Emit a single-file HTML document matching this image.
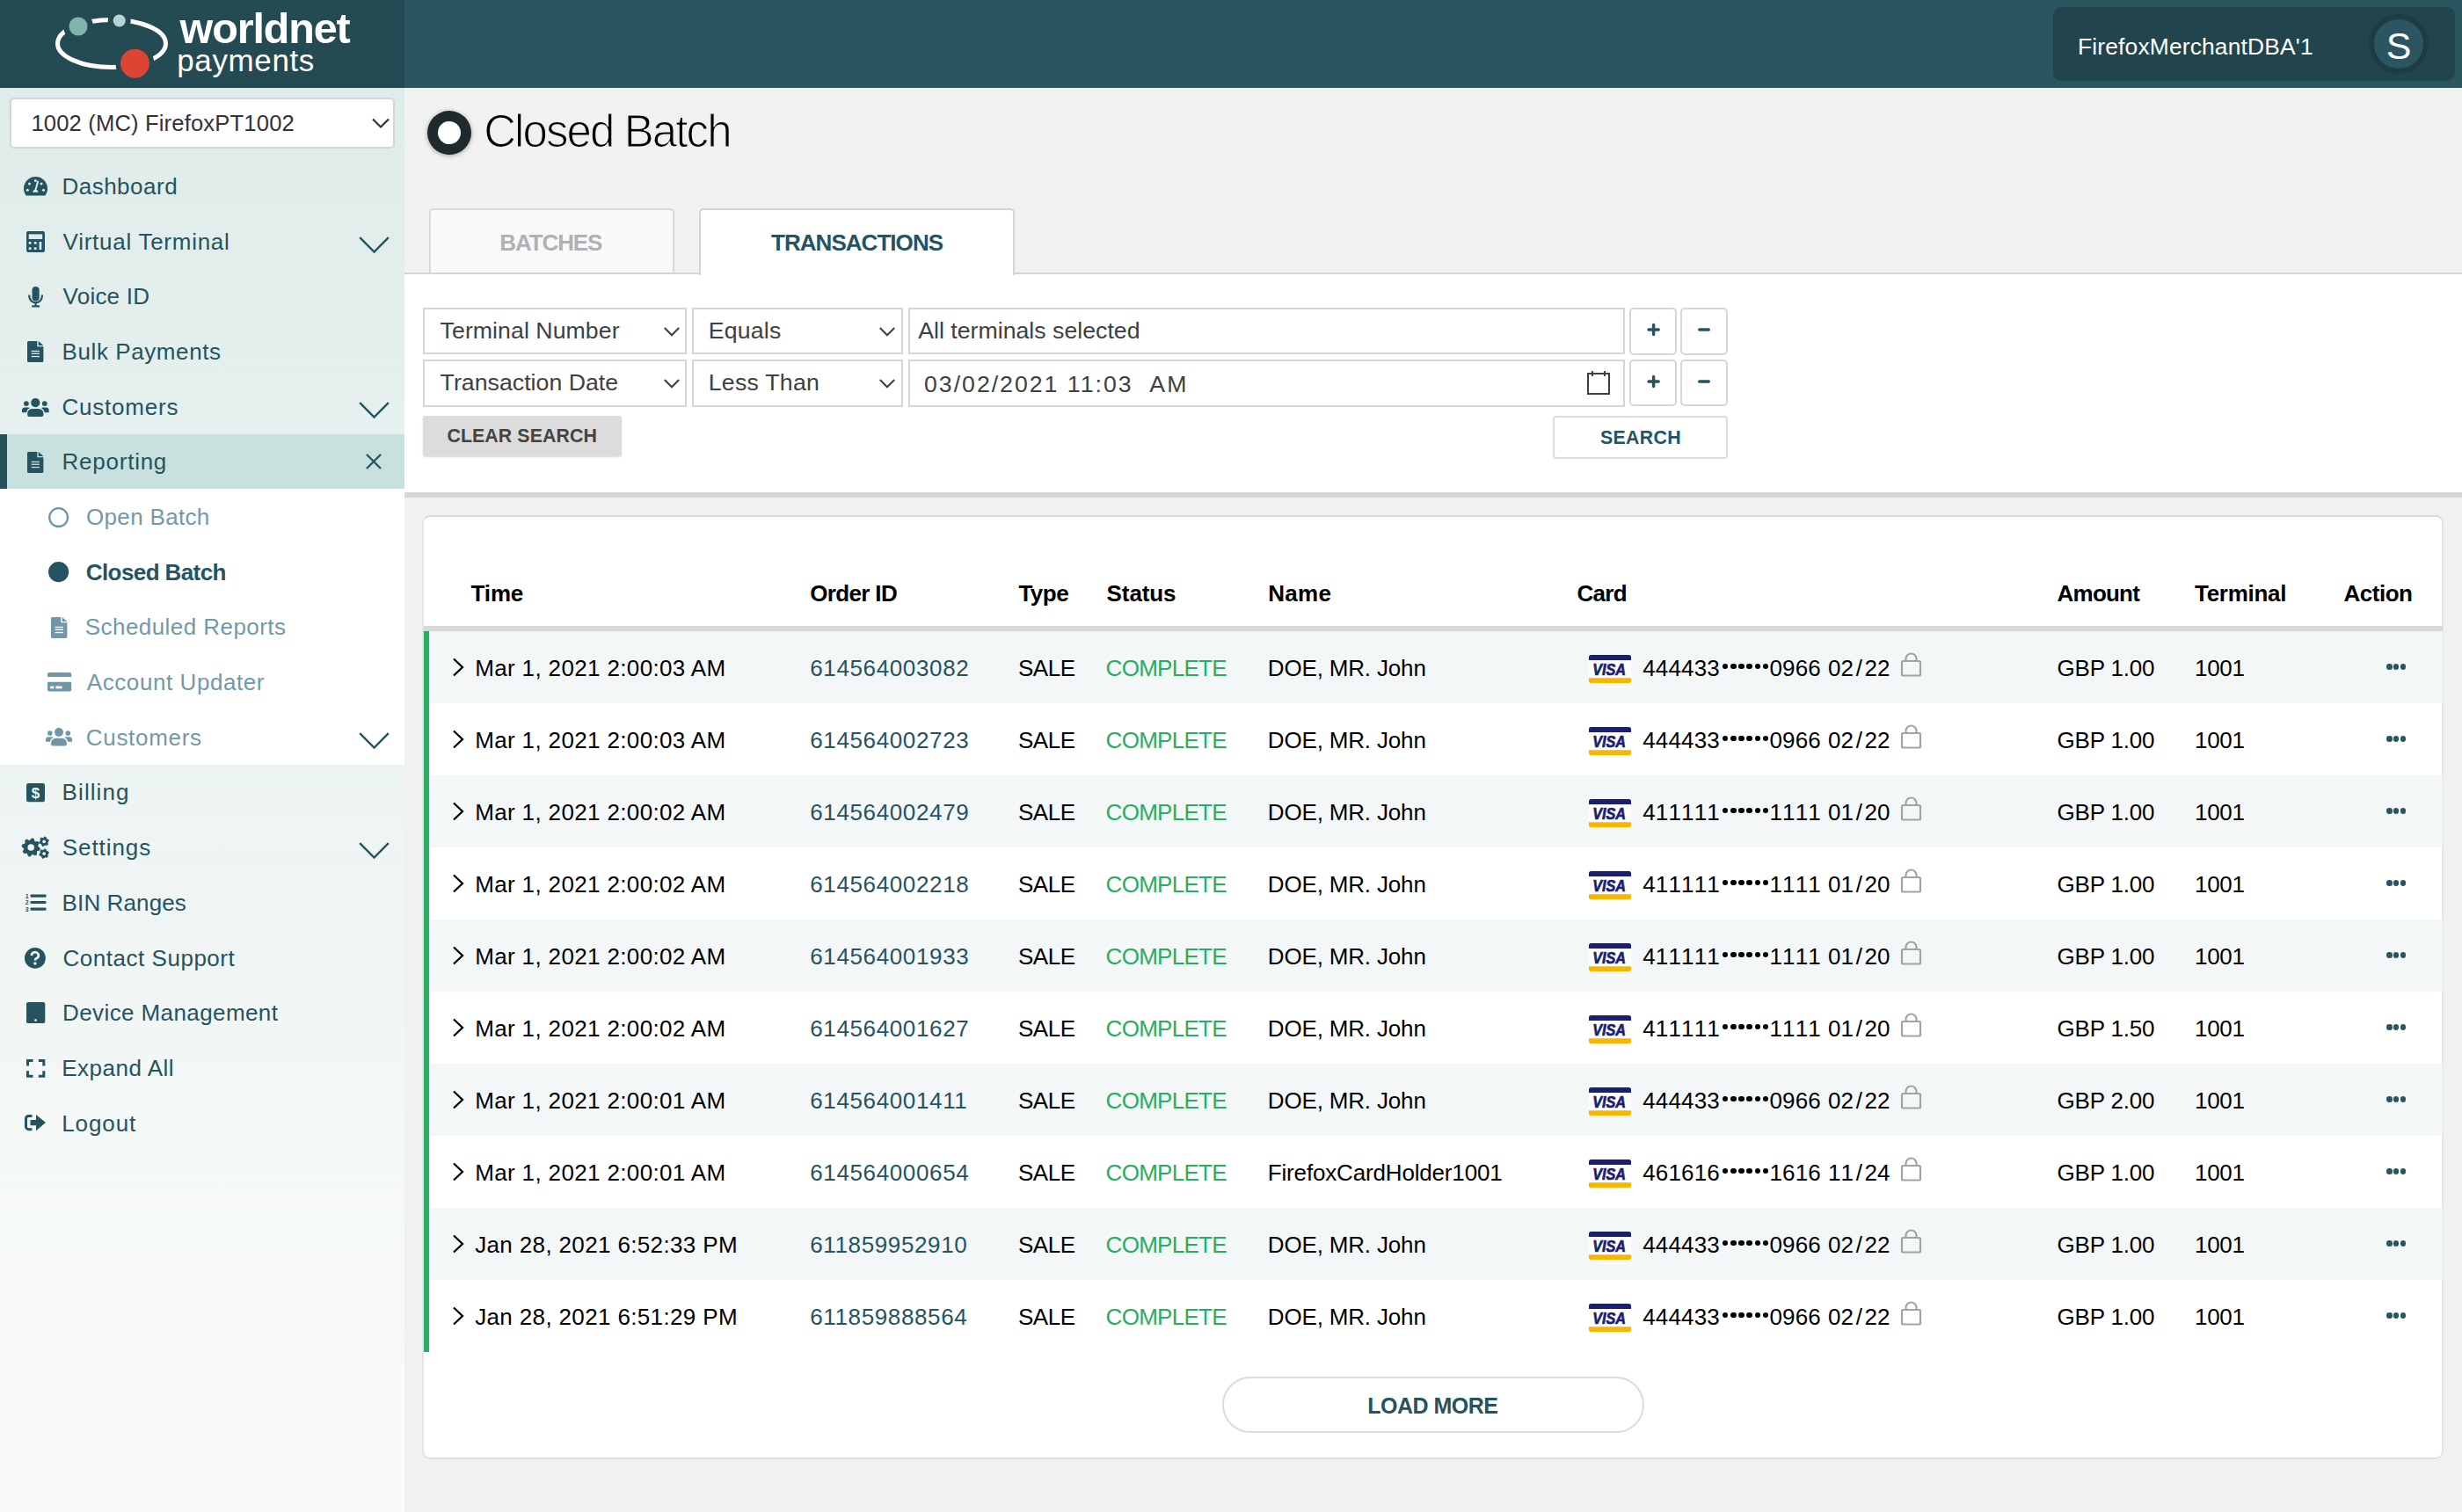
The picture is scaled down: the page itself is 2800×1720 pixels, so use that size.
<!DOCTYPE html>
<html><head><meta charset="utf-8">
<style>
*{box-sizing:border-box;margin:0;padding:0}
html,body{width:2800px;height:1720px;overflow:hidden;background:#f0f0f0;font-family:"Liberation Sans",sans-serif;}
.abs{position:absolute}
.t{position:absolute;white-space:nowrap;line-height:1}
svg{display:block}
</style></head><body>
<div class="abs" style="left:0px;top:0px;width:2800px;height:100px;background:#2a5660"></div>
<div class="abs" style="left:0px;top:0px;width:460px;height:100px;background:#244b54"></div>
<svg class="abs" style="left:0;top:0" width="460" height="100" viewBox="0 0 460 100">
<ellipse cx="127" cy="49.5" rx="61.5" ry="27" fill="none" stroke="#fff" stroke-width="5"/>
<circle cx="89" cy="30" r="17" fill="#244b54"/>
<circle cx="135.7" cy="23.5" r="13" fill="#244b54"/>
<circle cx="153.4" cy="72.2" r="22" fill="#244b54"/>
<circle cx="89" cy="30" r="10.5" fill="#7fb5ad"/>
<circle cx="135.7" cy="23.5" r="7" fill="#b5d6d3"/>
<circle cx="153.4" cy="72.2" r="16.5" fill="#dc4433"/>
</svg>
<div class="t" style="left:204.59999999999985px;top:8.34px;font-size:48.5px;color:#fff;font-weight:700;letter-spacing:-1.143px;">worldnet</div>
<div class="t" style="left:201.19999999999987px;top:50.87px;font-size:35px;color:#fff;font-weight:400;letter-spacing:0.629px;">payments</div>
<div class="abs" style="left:2335px;top:8px;width:457px;height:84px;background:#22444d;border-radius:9px"></div>
<div class="t" style="left:2363.0px;top:39.65px;font-size:26.4px;color:#fff;font-weight:400;letter-spacing:0.158px;">FirefoxMerchantDBA'1</div>
<div class="abs" style="left:2694px;top:16px;width:68px;height:68px;border-radius:50%;background:#2b5661;border:6px solid #1d3d45"></div>
<div class="t" style="left:2228px;width:1000px;text-align:center;top:30.60px;font-size:43px;color:#fff;font-weight:400;">S</div>
<div class="abs" style="left:0px;top:100px;width:460px;height:1620px;background:linear-gradient(#dfecea 0%,#f9fbfa 92%)"></div>
<div class="abs" style="left:11px;top:111px;width:437.5px;height:58px;background:#fff;border:2px solid #d3d6d6;border-radius:5px"></div>
<div class="t" style="left:35.39999999999996px;top:128.33px;font-size:25.6px;color:#333;font-weight:400;letter-spacing:0.159px;">1002 (MC) FirefoxPT1002</div>
<svg class="abs" style="left:420px;top:130px" width="26" height="20"><polyline points="4,5.5 13,14.5 22,5.5" fill="none" stroke="#333" stroke-width="2.2"/></svg>
<div class="abs" style="left:0px;top:493.59999999999997px;width:460px;height:62.68000000000001px;background:#c8e1de"></div>
<div class="abs" style="left:0px;top:493.59999999999997px;width:8px;height:62.68000000000001px;background:#24505a"></div>
<div class="abs" style="left:0px;top:556.28px;width:460px;height:313.4000000000001px;background:#fff"></div>
<div class="t" style="left:70.40000000000015px;top:198.99px;font-size:26px;color:#25535f;font-weight:400;letter-spacing:0.500px;">Dashboard</div>
<div class="t" style="left:71.59999999999985px;top:261.67px;font-size:26px;color:#25535f;font-weight:400;letter-spacing:0.733px;">Virtual Terminal</div>
<div class="t" style="left:71.59999999999985px;top:324.35px;font-size:26px;color:#25535f;font-weight:400;letter-spacing:0.214px;">Voice ID</div>
<div class="t" style="left:70.59999999999985px;top:387.03px;font-size:26px;color:#25535f;font-weight:400;letter-spacing:0.583px;">Bulk Payments</div>
<div class="t" style="left:70.40000000000015px;top:449.71px;font-size:26px;color:#25535f;font-weight:400;letter-spacing:0.812px;">Customers</div>
<div class="t" style="left:70.59999999999985px;top:512.39px;font-size:26px;color:#25535f;font-weight:400;letter-spacing:0.750px;">Reporting</div>
<div class="t" style="left:98.0px;top:575.07px;font-size:26px;color:#7199aa;font-weight:400;letter-spacing:0.333px;">Open Batch</div>
<div class="t" style="left:97.79999999999993px;top:637.75px;font-size:26px;color:#25535f;font-weight:700;letter-spacing:-0.591px;">Closed Batch</div>
<div class="t" style="left:96.79999999999993px;top:700.43px;font-size:26px;color:#7199aa;font-weight:400;letter-spacing:0.437px;">Scheduled Reports</div>
<div class="t" style="left:98.79999999999993px;top:763.11px;font-size:26px;color:#7199aa;font-weight:400;letter-spacing:0.571px;">Account Updater</div>
<div class="t" style="left:97.79999999999993px;top:825.79px;font-size:26px;color:#7199aa;font-weight:400;letter-spacing:0.688px;">Customers</div>
<div class="t" style="left:70.59999999999985px;top:888.47px;font-size:26px;color:#25535f;font-weight:400;letter-spacing:1.083px;">Billing</div>
<div class="t" style="left:70.79999999999993px;top:951.15px;font-size:26px;color:#25535f;font-weight:400;letter-spacing:0.929px;">Settings</div>
<div class="t" style="left:70.59999999999985px;top:1013.83px;font-size:26px;color:#25535f;font-weight:400;letter-spacing:0.111px;">BIN Ranges</div>
<div class="t" style="left:71.40000000000015px;top:1076.51px;font-size:26px;color:#25535f;font-weight:400;letter-spacing:0.536px;">Contact Support</div>
<div class="t" style="left:71.0px;top:1139.19px;font-size:26px;color:#25535f;font-weight:400;letter-spacing:0.406px;">Device Management</div>
<div class="t" style="left:70.20000000000007px;top:1201.87px;font-size:26px;color:#25535f;font-weight:400;letter-spacing:0.500px;">Expand All</div>
<div class="t" style="left:70.20000000000007px;top:1264.55px;font-size:26px;color:#25535f;font-weight:400;letter-spacing:0.900px;">Logout</div>
<div class="abs" style="left:460px;top:100px;width:2340px;height:1620px;background:#f1f1f1"></div>
<div class="abs" style="left:486px;top:126px;width:50px;height:50px;border-radius:50%;background:#1e2a2e;box-shadow:0 1px 5px rgba(0,0,0,0.35)"></div>
<div class="abs" style="left:498px;top:138px;width:26px;height:26px;border-radius:50%;background:#fff"></div>
<div class="t" style="left:550.2000000000012px;top:124.03px;font-size:51px;color:#000;font-weight:400;-webkit-text-stroke:1.2px #f1f1f1;letter-spacing:-1.909px;">Closed Batch</div>
<div class="abs" style="left:460px;top:311px;width:2340px;height:1409px;background:#fff"></div>
<div class="abs" style="left:460px;top:310px;width:2340px;height:2px;background:#cfd5d9"></div>
<div class="abs" style="left:487.5px;top:236.5px;width:279.5px;height:73.5px;background:#f9f9f9;border:2px solid #d5dadd;border-bottom:none;border-radius:5px 5px 0 0"></div>
<div class="abs" style="left:795px;top:236.5px;width:359px;height:76.5px;background:#fff;border:2px solid #cfd5d9;border-bottom:none;border-radius:5px 5px 0 0"></div>
<div class="t" style="left:568.2000000000012px;top:263.39px;font-size:26px;color:#b1b1b5;font-weight:700;letter-spacing:-1.083px;">BATCHES</div>
<div class="t" style="left:877.0px;top:263.39px;font-size:26px;color:#25535f;font-weight:700;letter-spacing:-0.955px;">TRANSACTIONS</div>
<div class="abs" style="left:481px;top:350.3px;width:300px;height:52.69999999999999px;background:#fff;border:2px solid #d6d6d6"></div>
<div class="abs" style="left:787px;top:350.3px;width:240px;height:52.69999999999999px;background:#fff;border:2px solid #d6d6d6"></div>
<div class="abs" style="left:1032.5px;top:350.3px;width:815.0px;height:52.69999999999999px;background:#fff;border:2px solid #d6d6d6"></div>
<div class="abs" style="left:1853.3px;top:349.8px;width:54.200000000000045px;height:53.80000000000001px;background:#fff;border:2px solid #d6d6d6;border-radius:5px"></div>
<div class="abs" style="left:1911.2px;top:349.8px;width:53.5px;height:53.80000000000001px;background:#fff;border:2px solid #d6d6d6;border-radius:5px"></div>
<div class="t" style="left:500.6000000000006px;top:362.82px;font-size:26.67px;color:#404040;font-weight:400;letter-spacing:0.071px;">Terminal Number</div>
<div class="t" style="left:805.7999999999988px;top:362.82px;font-size:26.67px;color:#404040;font-weight:400;letter-spacing:0.200px;">Equals</div>
<svg class="abs" style="left:752.5px;top:368.65px" width="22" height="16"><polyline points="2.8,4 11,12.2 19.2,4" fill="none" stroke="#404040" stroke-width="2.1"/></svg>
<svg class="abs" style="left:998px;top:368.65px" width="22" height="16"><polyline points="2.8,4 11,12.2 19.2,4" fill="none" stroke="#404040" stroke-width="2.1"/></svg>
<svg class="abs" style="left:1860px;top:359.90000000000003px" width="100" height="30"><path d="M15 15 H26.2 M20.6 9.4 V20.6 M72.7 15 H83.3" fill="none" stroke="#25535f" stroke-width="3.4" stroke-linecap="round"/></svg>
<div class="abs" style="left:481px;top:409px;width:300px;height:53.5px;background:#fff;border:2px solid #d6d6d6"></div>
<div class="abs" style="left:787px;top:409px;width:240px;height:53.5px;background:#fff;border:2px solid #d6d6d6"></div>
<div class="abs" style="left:1032.5px;top:409px;width:815.0px;height:53.5px;background:#fff;border:2px solid #d6d6d6"></div>
<div class="abs" style="left:1853.3px;top:408.5px;width:54.200000000000045px;height:53.80000000000001px;background:#fff;border:2px solid #d6d6d6;border-radius:5px"></div>
<div class="abs" style="left:1911.2px;top:408.5px;width:53.5px;height:53.80000000000001px;background:#fff;border:2px solid #d6d6d6;border-radius:5px"></div>
<div class="t" style="left:500.6000000000006px;top:421.82px;font-size:26.67px;color:#404040;font-weight:400;letter-spacing:0.033px;">Transaction Date</div>
<div class="t" style="left:805.7999999999988px;top:421.82px;font-size:26.67px;color:#404040;font-weight:400;letter-spacing:0.250px;">Less Than</div>
<svg class="abs" style="left:752.5px;top:427.75px" width="22" height="16"><polyline points="2.8,4 11,12.2 19.2,4" fill="none" stroke="#404040" stroke-width="2.1"/></svg>
<svg class="abs" style="left:998px;top:427.75px" width="22" height="16"><polyline points="2.8,4 11,12.2 19.2,4" fill="none" stroke="#404040" stroke-width="2.1"/></svg>
<svg class="abs" style="left:1860px;top:418.6px" width="100" height="30"><path d="M15 15 H26.2 M20.6 9.4 V20.6 M72.7 15 H83.3" fill="none" stroke="#25535f" stroke-width="3.4" stroke-linecap="round"/></svg>
<div class="t" style="left:1044.2000000000012px;top:362.82px;font-size:26.67px;color:#404040;font-weight:400;letter-spacing:0.024px;">All terminals selected</div>
<div class="t" style="left:1051.0px;top:423.92px;font-size:26.67px;color:#404040;font-weight:400;letter-spacing:2.000px;">03/02/2021&nbsp;11:03&nbsp;&nbsp;AM</div>
<svg class="abs" style="left:1803px;top:420px" width="30" height="30"><rect x="3" y="5" width="24" height="23" fill="none" stroke="#404040" stroke-width="2"/><line x1="8" y1="2" x2="8" y2="8" stroke="#404040" stroke-width="2"/><line x1="22" y1="2" x2="22" y2="8" stroke="#404040" stroke-width="2"/></svg>
<div class="abs" style="left:481px;top:473px;width:226px;height:46px;background:#dcdcdc;border-radius:3px;box-shadow:0 1px 2px rgba(0,0,0,0.15)"></div>
<div class="t" style="left:508.3999999999994px;top:485.54px;font-size:21.33px;color:#444;font-weight:700;letter-spacing:0.091px;">CLEAR SEARCH</div>
<div class="abs" style="left:1765.5px;top:473px;width:199.0px;height:49px;background:#fff;border:2px solid #dcdcdc;border-radius:4px"></div>
<div class="t" style="left:1820.0px;top:488.14px;font-size:21.33px;color:#25535f;font-weight:700;letter-spacing:0.300px;">SEARCH</div>
<div class="abs" style="left:460px;top:560px;width:2340px;height:6px;background:#d7d7d7"></div>
<div class="abs" style="left:460px;top:566px;width:2340px;height:1154px;background:#f1f1f1"></div>
<div class="abs" style="left:480px;top:586px;width:2299px;height:1074px;background:#fff;border:2px solid #e4e4e4;border-top-color:#d9d9d9;border-bottom-color:#e0e0e0;border-radius:9px"></div>
<div class="t" style="left:535.6000000000006px;top:661.99px;font-size:26px;color:#000;font-weight:700;letter-spacing:-0.167px;">Time</div>
<div class="t" style="left:921.2000000000012px;top:661.99px;font-size:26px;color:#000;font-weight:700;letter-spacing:-0.643px;">Order ID</div>
<div class="t" style="left:1158.4000000000024px;top:661.99px;font-size:26px;color:#000;font-weight:700;letter-spacing:-0.500px;">Type</div>
<div class="t" style="left:1258.5999999999976px;top:661.99px;font-size:26px;color:#000;font-weight:700;letter-spacing:-0.100px;">Status</div>
<div class="t" style="left:1442.2000000000012px;top:661.99px;font-size:26px;color:#000;font-weight:700;letter-spacing:0.333px;">Name</div>
<div class="t" style="left:1793.4000000000024px;top:661.99px;font-size:26px;color:#000;font-weight:700;letter-spacing:-0.667px;">Card</div>
<div class="t" style="left:2339.5999999999976px;top:661.99px;font-size:26px;color:#000;font-weight:700;letter-spacing:-0.800px;">Amount</div>
<div class="t" style="left:2496.0px;top:661.99px;font-size:26px;color:#000;font-weight:700;letter-spacing:-0.286px;">Terminal</div>
<div class="t" style="left:2665.5999999999976px;top:661.99px;font-size:26px;color:#000;font-weight:700;letter-spacing:-0.500px;">Action</div>
<div class="abs" style="left:482px;top:712.3px;width:2295.5px;height:5.7000000000000455px;background:#d8d8d8"></div>
<div class="abs" style="left:482px;top:718px;width:2295.5px;height:82px;background:#f4f7f8"></div>
<svg class="abs" style="left:512px;top:747px" width="20" height="24"><polyline points="4,2.5 14,12 4,21.5" fill="none" stroke="#000" stroke-width="2.3"/></svg>
<div class="t" style="left:540.2000000000012px;top:746.99px;font-size:26px;color:#000;font-weight:400;letter-spacing:0.357px;">Mar 1, 2021 2:00:03 AM</div>
<div class="t" style="left:921.2000000000012px;top:746.99px;font-size:26px;color:#25535f;font-weight:400;letter-spacing:0.636px;">614564003082</div>
<div class="t" style="left:1158.0px;top:746.99px;font-size:26px;color:#000;font-weight:400;letter-spacing:-0.500px;">SALE</div>
<div class="t" style="left:1257.5999999999976px;top:746.99px;font-size:26px;color:#27ae60;font-weight:400;letter-spacing:-0.714px;">COMPLETE</div>
<div class="t" style="left:1441.7999999999988px;top:746.99px;font-size:26px;color:#000;font-weight:400;letter-spacing:-0.167px;">DOE, MR. John</div>
<svg class="abs" style="left:1807px;top:745px" width="48" height="32" viewBox="0 0 48 32"><rect x="0" y="0" width="48" height="32" rx="2.5" fill="#fff"/><path d="M2.5 0 H45.5 A2.5 2.5 0 0 1 48 2.5 V6 H0 V2.5 A2.5 2.5 0 0 1 2.5 0Z" fill="#1a1f71"/><path d="M0 26.3 H48 V29.5 A2.5 2.5 0 0 1 45.5 32 H2.5 A2.5 2.5 0 0 1 0 29.5Z" fill="#f7b600"/><text x="4.2" y="23" textLength="37.8" lengthAdjust="spacingAndGlyphs" font-family="Liberation Sans" font-weight="700" font-style="italic" font-size="17.5" fill="#1a1f71" stroke="#1a1f71" stroke-width="0.7">VISA</text></svg>
<div class="t" style="left:1868.2px;top:746.99px;font-size:26px;color:#000"><span style="display:inline-block;width:14.6px;text-align:center">4</span><span style="display:inline-block;width:14.6px;text-align:center">4</span><span style="display:inline-block;width:14.6px;text-align:center">4</span><span style="display:inline-block;width:14.6px;text-align:center">4</span><span style="display:inline-block;width:14.6px;text-align:center">3</span><span style="display:inline-block;width:14.6px;text-align:center">3</span></div>
<div class="abs" style="left:1959.3px;top:754.5px;width:6.2px;height:6.2px;border-radius:50%;background:#000"></div>
<div class="abs" style="left:1968.35px;top:754.5px;width:6.2px;height:6.2px;border-radius:50%;background:#000"></div>
<div class="abs" style="left:1977.3999999999999px;top:754.5px;width:6.2px;height:6.2px;border-radius:50%;background:#000"></div>
<div class="abs" style="left:1986.45px;top:754.5px;width:6.2px;height:6.2px;border-radius:50%;background:#000"></div>
<div class="abs" style="left:1995.5px;top:754.5px;width:6.2px;height:6.2px;border-radius:50%;background:#000"></div>
<div class="abs" style="left:2004.55px;top:754.5px;width:6.2px;height:6.2px;border-radius:50%;background:#000"></div>
<div class="t" style="left:2012.4px;top:746.99px;font-size:26px;color:#000"><span style="display:inline-block;width:14.6px;text-align:center">0</span><span style="display:inline-block;width:14.6px;text-align:center">9</span><span style="display:inline-block;width:14.6px;text-align:center">6</span><span style="display:inline-block;width:14.6px;text-align:center">6</span><span style="display:inline-block;width:8.2px;text-align:center">&nbsp;</span><span style="display:inline-block;width:14.6px;text-align:center">0</span><span style="display:inline-block;width:14.6px;text-align:center">2</span><span style="display:inline-block;width:12.3px;text-align:center">/</span><span style="display:inline-block;width:14.6px;text-align:center">2</span><span style="display:inline-block;width:14.6px;text-align:center">2</span></div>
<svg class="abs" style="left:2160px;top:742px" width="27" height="28"><path d="M7.5 10 V7.5 A6 6 0 0 1 19.5 7.5 V10" fill="none" stroke="#a3a3a3" stroke-width="2.2"/><rect x="3" y="10" width="21" height="16.5" rx="1.5" fill="none" stroke="#a3a3a3" stroke-width="2.2"/></svg>
<div class="t" style="left:2339.5999999999976px;top:746.99px;font-size:26px;color:#000;font-weight:400;letter-spacing:-0.214px;">GBP 1.00</div>
<div class="t" style="left:2496.0px;top:746.99px;font-size:26px;color:#000;font-weight:400;letter-spacing:-0.333px;">1001</div>
<div class="abs" style="left:2714.0px;top:755.4px;width:6.5px;height:6.5px;border-radius:50%;background:#2a5560"></div>
<div class="abs" style="left:2721.8px;top:755.4px;width:6.5px;height:6.5px;border-radius:50%;background:#2a5560"></div>
<div class="abs" style="left:2729.6px;top:755.4px;width:6.5px;height:6.5px;border-radius:50%;background:#2a5560"></div>
<svg class="abs" style="left:512px;top:829px" width="20" height="24"><polyline points="4,2.5 14,12 4,21.5" fill="none" stroke="#000" stroke-width="2.3"/></svg>
<div class="t" style="left:540.2000000000012px;top:828.99px;font-size:26px;color:#000;font-weight:400;letter-spacing:0.357px;">Mar 1, 2021 2:00:03 AM</div>
<div class="t" style="left:921.2000000000012px;top:828.99px;font-size:26px;color:#25535f;font-weight:400;letter-spacing:0.636px;">614564002723</div>
<div class="t" style="left:1158.0px;top:828.99px;font-size:26px;color:#000;font-weight:400;letter-spacing:-0.500px;">SALE</div>
<div class="t" style="left:1257.5999999999976px;top:828.99px;font-size:26px;color:#27ae60;font-weight:400;letter-spacing:-0.714px;">COMPLETE</div>
<div class="t" style="left:1441.7999999999988px;top:828.99px;font-size:26px;color:#000;font-weight:400;letter-spacing:-0.167px;">DOE, MR. John</div>
<svg class="abs" style="left:1807px;top:827px" width="48" height="32" viewBox="0 0 48 32"><rect x="0" y="0" width="48" height="32" rx="2.5" fill="#fff"/><path d="M2.5 0 H45.5 A2.5 2.5 0 0 1 48 2.5 V6 H0 V2.5 A2.5 2.5 0 0 1 2.5 0Z" fill="#1a1f71"/><path d="M0 26.3 H48 V29.5 A2.5 2.5 0 0 1 45.5 32 H2.5 A2.5 2.5 0 0 1 0 29.5Z" fill="#f7b600"/><text x="4.2" y="23" textLength="37.8" lengthAdjust="spacingAndGlyphs" font-family="Liberation Sans" font-weight="700" font-style="italic" font-size="17.5" fill="#1a1f71" stroke="#1a1f71" stroke-width="0.7">VISA</text></svg>
<div class="t" style="left:1868.2px;top:828.99px;font-size:26px;color:#000"><span style="display:inline-block;width:14.6px;text-align:center">4</span><span style="display:inline-block;width:14.6px;text-align:center">4</span><span style="display:inline-block;width:14.6px;text-align:center">4</span><span style="display:inline-block;width:14.6px;text-align:center">4</span><span style="display:inline-block;width:14.6px;text-align:center">3</span><span style="display:inline-block;width:14.6px;text-align:center">3</span></div>
<div class="abs" style="left:1959.3px;top:836.5px;width:6.2px;height:6.2px;border-radius:50%;background:#000"></div>
<div class="abs" style="left:1968.35px;top:836.5px;width:6.2px;height:6.2px;border-radius:50%;background:#000"></div>
<div class="abs" style="left:1977.3999999999999px;top:836.5px;width:6.2px;height:6.2px;border-radius:50%;background:#000"></div>
<div class="abs" style="left:1986.45px;top:836.5px;width:6.2px;height:6.2px;border-radius:50%;background:#000"></div>
<div class="abs" style="left:1995.5px;top:836.5px;width:6.2px;height:6.2px;border-radius:50%;background:#000"></div>
<div class="abs" style="left:2004.55px;top:836.5px;width:6.2px;height:6.2px;border-radius:50%;background:#000"></div>
<div class="t" style="left:2012.4px;top:828.99px;font-size:26px;color:#000"><span style="display:inline-block;width:14.6px;text-align:center">0</span><span style="display:inline-block;width:14.6px;text-align:center">9</span><span style="display:inline-block;width:14.6px;text-align:center">6</span><span style="display:inline-block;width:14.6px;text-align:center">6</span><span style="display:inline-block;width:8.2px;text-align:center">&nbsp;</span><span style="display:inline-block;width:14.6px;text-align:center">0</span><span style="display:inline-block;width:14.6px;text-align:center">2</span><span style="display:inline-block;width:12.3px;text-align:center">/</span><span style="display:inline-block;width:14.6px;text-align:center">2</span><span style="display:inline-block;width:14.6px;text-align:center">2</span></div>
<svg class="abs" style="left:2160px;top:824px" width="27" height="28"><path d="M7.5 10 V7.5 A6 6 0 0 1 19.5 7.5 V10" fill="none" stroke="#a3a3a3" stroke-width="2.2"/><rect x="3" y="10" width="21" height="16.5" rx="1.5" fill="none" stroke="#a3a3a3" stroke-width="2.2"/></svg>
<div class="t" style="left:2339.5999999999976px;top:828.99px;font-size:26px;color:#000;font-weight:400;letter-spacing:-0.214px;">GBP 1.00</div>
<div class="t" style="left:2496.0px;top:828.99px;font-size:26px;color:#000;font-weight:400;letter-spacing:-0.333px;">1001</div>
<div class="abs" style="left:2714.0px;top:837.4px;width:6.5px;height:6.5px;border-radius:50%;background:#2a5560"></div>
<div class="abs" style="left:2721.8px;top:837.4px;width:6.5px;height:6.5px;border-radius:50%;background:#2a5560"></div>
<div class="abs" style="left:2729.6px;top:837.4px;width:6.5px;height:6.5px;border-radius:50%;background:#2a5560"></div>
<div class="abs" style="left:482px;top:882px;width:2295.5px;height:82px;background:#f4f7f8"></div>
<svg class="abs" style="left:512px;top:911px" width="20" height="24"><polyline points="4,2.5 14,12 4,21.5" fill="none" stroke="#000" stroke-width="2.3"/></svg>
<div class="t" style="left:540.2000000000012px;top:910.99px;font-size:26px;color:#000;font-weight:400;letter-spacing:0.357px;">Mar 1, 2021 2:00:02 AM</div>
<div class="t" style="left:921.2000000000012px;top:910.99px;font-size:26px;color:#25535f;font-weight:400;letter-spacing:0.636px;">614564002479</div>
<div class="t" style="left:1158.0px;top:910.99px;font-size:26px;color:#000;font-weight:400;letter-spacing:-0.500px;">SALE</div>
<div class="t" style="left:1257.5999999999976px;top:910.99px;font-size:26px;color:#27ae60;font-weight:400;letter-spacing:-0.714px;">COMPLETE</div>
<div class="t" style="left:1441.7999999999988px;top:910.99px;font-size:26px;color:#000;font-weight:400;letter-spacing:-0.167px;">DOE, MR. John</div>
<svg class="abs" style="left:1807px;top:909px" width="48" height="32" viewBox="0 0 48 32"><rect x="0" y="0" width="48" height="32" rx="2.5" fill="#fff"/><path d="M2.5 0 H45.5 A2.5 2.5 0 0 1 48 2.5 V6 H0 V2.5 A2.5 2.5 0 0 1 2.5 0Z" fill="#1a1f71"/><path d="M0 26.3 H48 V29.5 A2.5 2.5 0 0 1 45.5 32 H2.5 A2.5 2.5 0 0 1 0 29.5Z" fill="#f7b600"/><text x="4.2" y="23" textLength="37.8" lengthAdjust="spacingAndGlyphs" font-family="Liberation Sans" font-weight="700" font-style="italic" font-size="17.5" fill="#1a1f71" stroke="#1a1f71" stroke-width="0.7">VISA</text></svg>
<div class="t" style="left:1868.2px;top:910.99px;font-size:26px;color:#000"><span style="display:inline-block;width:14.6px;text-align:center">4</span><span style="display:inline-block;width:14.6px;text-align:center">1</span><span style="display:inline-block;width:14.6px;text-align:center">1</span><span style="display:inline-block;width:14.6px;text-align:center">1</span><span style="display:inline-block;width:14.6px;text-align:center">1</span><span style="display:inline-block;width:14.6px;text-align:center">1</span></div>
<div class="abs" style="left:1959.3px;top:918.5px;width:6.2px;height:6.2px;border-radius:50%;background:#000"></div>
<div class="abs" style="left:1968.35px;top:918.5px;width:6.2px;height:6.2px;border-radius:50%;background:#000"></div>
<div class="abs" style="left:1977.3999999999999px;top:918.5px;width:6.2px;height:6.2px;border-radius:50%;background:#000"></div>
<div class="abs" style="left:1986.45px;top:918.5px;width:6.2px;height:6.2px;border-radius:50%;background:#000"></div>
<div class="abs" style="left:1995.5px;top:918.5px;width:6.2px;height:6.2px;border-radius:50%;background:#000"></div>
<div class="abs" style="left:2004.55px;top:918.5px;width:6.2px;height:6.2px;border-radius:50%;background:#000"></div>
<div class="t" style="left:2012.4px;top:910.99px;font-size:26px;color:#000"><span style="display:inline-block;width:14.6px;text-align:center">1</span><span style="display:inline-block;width:14.6px;text-align:center">1</span><span style="display:inline-block;width:14.6px;text-align:center">1</span><span style="display:inline-block;width:14.6px;text-align:center">1</span><span style="display:inline-block;width:8.2px;text-align:center">&nbsp;</span><span style="display:inline-block;width:14.6px;text-align:center">0</span><span style="display:inline-block;width:14.6px;text-align:center">1</span><span style="display:inline-block;width:12.3px;text-align:center">/</span><span style="display:inline-block;width:14.6px;text-align:center">2</span><span style="display:inline-block;width:14.6px;text-align:center">0</span></div>
<svg class="abs" style="left:2160px;top:906px" width="27" height="28"><path d="M7.5 10 V7.5 A6 6 0 0 1 19.5 7.5 V10" fill="none" stroke="#a3a3a3" stroke-width="2.2"/><rect x="3" y="10" width="21" height="16.5" rx="1.5" fill="none" stroke="#a3a3a3" stroke-width="2.2"/></svg>
<div class="t" style="left:2339.5999999999976px;top:910.99px;font-size:26px;color:#000;font-weight:400;letter-spacing:-0.214px;">GBP 1.00</div>
<div class="t" style="left:2496.0px;top:910.99px;font-size:26px;color:#000;font-weight:400;letter-spacing:-0.333px;">1001</div>
<div class="abs" style="left:2714.0px;top:919.4px;width:6.5px;height:6.5px;border-radius:50%;background:#2a5560"></div>
<div class="abs" style="left:2721.8px;top:919.4px;width:6.5px;height:6.5px;border-radius:50%;background:#2a5560"></div>
<div class="abs" style="left:2729.6px;top:919.4px;width:6.5px;height:6.5px;border-radius:50%;background:#2a5560"></div>
<svg class="abs" style="left:512px;top:993px" width="20" height="24"><polyline points="4,2.5 14,12 4,21.5" fill="none" stroke="#000" stroke-width="2.3"/></svg>
<div class="t" style="left:540.2000000000012px;top:992.99px;font-size:26px;color:#000;font-weight:400;letter-spacing:0.357px;">Mar 1, 2021 2:00:02 AM</div>
<div class="t" style="left:921.2000000000012px;top:992.99px;font-size:26px;color:#25535f;font-weight:400;letter-spacing:0.636px;">614564002218</div>
<div class="t" style="left:1158.0px;top:992.99px;font-size:26px;color:#000;font-weight:400;letter-spacing:-0.500px;">SALE</div>
<div class="t" style="left:1257.5999999999976px;top:992.99px;font-size:26px;color:#27ae60;font-weight:400;letter-spacing:-0.714px;">COMPLETE</div>
<div class="t" style="left:1441.7999999999988px;top:992.99px;font-size:26px;color:#000;font-weight:400;letter-spacing:-0.167px;">DOE, MR. John</div>
<svg class="abs" style="left:1807px;top:991px" width="48" height="32" viewBox="0 0 48 32"><rect x="0" y="0" width="48" height="32" rx="2.5" fill="#fff"/><path d="M2.5 0 H45.5 A2.5 2.5 0 0 1 48 2.5 V6 H0 V2.5 A2.5 2.5 0 0 1 2.5 0Z" fill="#1a1f71"/><path d="M0 26.3 H48 V29.5 A2.5 2.5 0 0 1 45.5 32 H2.5 A2.5 2.5 0 0 1 0 29.5Z" fill="#f7b600"/><text x="4.2" y="23" textLength="37.8" lengthAdjust="spacingAndGlyphs" font-family="Liberation Sans" font-weight="700" font-style="italic" font-size="17.5" fill="#1a1f71" stroke="#1a1f71" stroke-width="0.7">VISA</text></svg>
<div class="t" style="left:1868.2px;top:992.99px;font-size:26px;color:#000"><span style="display:inline-block;width:14.6px;text-align:center">4</span><span style="display:inline-block;width:14.6px;text-align:center">1</span><span style="display:inline-block;width:14.6px;text-align:center">1</span><span style="display:inline-block;width:14.6px;text-align:center">1</span><span style="display:inline-block;width:14.6px;text-align:center">1</span><span style="display:inline-block;width:14.6px;text-align:center">1</span></div>
<div class="abs" style="left:1959.3px;top:1000.5px;width:6.2px;height:6.2px;border-radius:50%;background:#000"></div>
<div class="abs" style="left:1968.35px;top:1000.5px;width:6.2px;height:6.2px;border-radius:50%;background:#000"></div>
<div class="abs" style="left:1977.3999999999999px;top:1000.5px;width:6.2px;height:6.2px;border-radius:50%;background:#000"></div>
<div class="abs" style="left:1986.45px;top:1000.5px;width:6.2px;height:6.2px;border-radius:50%;background:#000"></div>
<div class="abs" style="left:1995.5px;top:1000.5px;width:6.2px;height:6.2px;border-radius:50%;background:#000"></div>
<div class="abs" style="left:2004.55px;top:1000.5px;width:6.2px;height:6.2px;border-radius:50%;background:#000"></div>
<div class="t" style="left:2012.4px;top:992.99px;font-size:26px;color:#000"><span style="display:inline-block;width:14.6px;text-align:center">1</span><span style="display:inline-block;width:14.6px;text-align:center">1</span><span style="display:inline-block;width:14.6px;text-align:center">1</span><span style="display:inline-block;width:14.6px;text-align:center">1</span><span style="display:inline-block;width:8.2px;text-align:center">&nbsp;</span><span style="display:inline-block;width:14.6px;text-align:center">0</span><span style="display:inline-block;width:14.6px;text-align:center">1</span><span style="display:inline-block;width:12.3px;text-align:center">/</span><span style="display:inline-block;width:14.6px;text-align:center">2</span><span style="display:inline-block;width:14.6px;text-align:center">0</span></div>
<svg class="abs" style="left:2160px;top:988px" width="27" height="28"><path d="M7.5 10 V7.5 A6 6 0 0 1 19.5 7.5 V10" fill="none" stroke="#a3a3a3" stroke-width="2.2"/><rect x="3" y="10" width="21" height="16.5" rx="1.5" fill="none" stroke="#a3a3a3" stroke-width="2.2"/></svg>
<div class="t" style="left:2339.5999999999976px;top:992.99px;font-size:26px;color:#000;font-weight:400;letter-spacing:-0.214px;">GBP 1.00</div>
<div class="t" style="left:2496.0px;top:992.99px;font-size:26px;color:#000;font-weight:400;letter-spacing:-0.333px;">1001</div>
<div class="abs" style="left:2714.0px;top:1001.4px;width:6.5px;height:6.5px;border-radius:50%;background:#2a5560"></div>
<div class="abs" style="left:2721.8px;top:1001.4px;width:6.5px;height:6.5px;border-radius:50%;background:#2a5560"></div>
<div class="abs" style="left:2729.6px;top:1001.4px;width:6.5px;height:6.5px;border-radius:50%;background:#2a5560"></div>
<div class="abs" style="left:482px;top:1046px;width:2295.5px;height:82px;background:#f4f7f8"></div>
<svg class="abs" style="left:512px;top:1075px" width="20" height="24"><polyline points="4,2.5 14,12 4,21.5" fill="none" stroke="#000" stroke-width="2.3"/></svg>
<div class="t" style="left:540.2000000000012px;top:1074.99px;font-size:26px;color:#000;font-weight:400;letter-spacing:0.357px;">Mar 1, 2021 2:00:02 AM</div>
<div class="t" style="left:921.2000000000012px;top:1074.99px;font-size:26px;color:#25535f;font-weight:400;letter-spacing:0.636px;">614564001933</div>
<div class="t" style="left:1158.0px;top:1074.99px;font-size:26px;color:#000;font-weight:400;letter-spacing:-0.500px;">SALE</div>
<div class="t" style="left:1257.5999999999976px;top:1074.99px;font-size:26px;color:#27ae60;font-weight:400;letter-spacing:-0.714px;">COMPLETE</div>
<div class="t" style="left:1441.7999999999988px;top:1074.99px;font-size:26px;color:#000;font-weight:400;letter-spacing:-0.167px;">DOE, MR. John</div>
<svg class="abs" style="left:1807px;top:1073px" width="48" height="32" viewBox="0 0 48 32"><rect x="0" y="0" width="48" height="32" rx="2.5" fill="#fff"/><path d="M2.5 0 H45.5 A2.5 2.5 0 0 1 48 2.5 V6 H0 V2.5 A2.5 2.5 0 0 1 2.5 0Z" fill="#1a1f71"/><path d="M0 26.3 H48 V29.5 A2.5 2.5 0 0 1 45.5 32 H2.5 A2.5 2.5 0 0 1 0 29.5Z" fill="#f7b600"/><text x="4.2" y="23" textLength="37.8" lengthAdjust="spacingAndGlyphs" font-family="Liberation Sans" font-weight="700" font-style="italic" font-size="17.5" fill="#1a1f71" stroke="#1a1f71" stroke-width="0.7">VISA</text></svg>
<div class="t" style="left:1868.2px;top:1074.99px;font-size:26px;color:#000"><span style="display:inline-block;width:14.6px;text-align:center">4</span><span style="display:inline-block;width:14.6px;text-align:center">1</span><span style="display:inline-block;width:14.6px;text-align:center">1</span><span style="display:inline-block;width:14.6px;text-align:center">1</span><span style="display:inline-block;width:14.6px;text-align:center">1</span><span style="display:inline-block;width:14.6px;text-align:center">1</span></div>
<div class="abs" style="left:1959.3px;top:1082.5px;width:6.2px;height:6.2px;border-radius:50%;background:#000"></div>
<div class="abs" style="left:1968.35px;top:1082.5px;width:6.2px;height:6.2px;border-radius:50%;background:#000"></div>
<div class="abs" style="left:1977.3999999999999px;top:1082.5px;width:6.2px;height:6.2px;border-radius:50%;background:#000"></div>
<div class="abs" style="left:1986.45px;top:1082.5px;width:6.2px;height:6.2px;border-radius:50%;background:#000"></div>
<div class="abs" style="left:1995.5px;top:1082.5px;width:6.2px;height:6.2px;border-radius:50%;background:#000"></div>
<div class="abs" style="left:2004.55px;top:1082.5px;width:6.2px;height:6.2px;border-radius:50%;background:#000"></div>
<div class="t" style="left:2012.4px;top:1074.99px;font-size:26px;color:#000"><span style="display:inline-block;width:14.6px;text-align:center">1</span><span style="display:inline-block;width:14.6px;text-align:center">1</span><span style="display:inline-block;width:14.6px;text-align:center">1</span><span style="display:inline-block;width:14.6px;text-align:center">1</span><span style="display:inline-block;width:8.2px;text-align:center">&nbsp;</span><span style="display:inline-block;width:14.6px;text-align:center">0</span><span style="display:inline-block;width:14.6px;text-align:center">1</span><span style="display:inline-block;width:12.3px;text-align:center">/</span><span style="display:inline-block;width:14.6px;text-align:center">2</span><span style="display:inline-block;width:14.6px;text-align:center">0</span></div>
<svg class="abs" style="left:2160px;top:1070px" width="27" height="28"><path d="M7.5 10 V7.5 A6 6 0 0 1 19.5 7.5 V10" fill="none" stroke="#a3a3a3" stroke-width="2.2"/><rect x="3" y="10" width="21" height="16.5" rx="1.5" fill="none" stroke="#a3a3a3" stroke-width="2.2"/></svg>
<div class="t" style="left:2339.5999999999976px;top:1074.99px;font-size:26px;color:#000;font-weight:400;letter-spacing:-0.214px;">GBP 1.00</div>
<div class="t" style="left:2496.0px;top:1074.99px;font-size:26px;color:#000;font-weight:400;letter-spacing:-0.333px;">1001</div>
<div class="abs" style="left:2714.0px;top:1083.4px;width:6.5px;height:6.5px;border-radius:50%;background:#2a5560"></div>
<div class="abs" style="left:2721.8px;top:1083.4px;width:6.5px;height:6.5px;border-radius:50%;background:#2a5560"></div>
<div class="abs" style="left:2729.6px;top:1083.4px;width:6.5px;height:6.5px;border-radius:50%;background:#2a5560"></div>
<svg class="abs" style="left:512px;top:1157px" width="20" height="24"><polyline points="4,2.5 14,12 4,21.5" fill="none" stroke="#000" stroke-width="2.3"/></svg>
<div class="t" style="left:540.2000000000012px;top:1156.99px;font-size:26px;color:#000;font-weight:400;letter-spacing:0.357px;">Mar 1, 2021 2:00:02 AM</div>
<div class="t" style="left:921.2000000000012px;top:1156.99px;font-size:26px;color:#25535f;font-weight:400;letter-spacing:0.636px;">614564001627</div>
<div class="t" style="left:1158.0px;top:1156.99px;font-size:26px;color:#000;font-weight:400;letter-spacing:-0.500px;">SALE</div>
<div class="t" style="left:1257.5999999999976px;top:1156.99px;font-size:26px;color:#27ae60;font-weight:400;letter-spacing:-0.714px;">COMPLETE</div>
<div class="t" style="left:1441.7999999999988px;top:1156.99px;font-size:26px;color:#000;font-weight:400;letter-spacing:-0.167px;">DOE, MR. John</div>
<svg class="abs" style="left:1807px;top:1155px" width="48" height="32" viewBox="0 0 48 32"><rect x="0" y="0" width="48" height="32" rx="2.5" fill="#fff"/><path d="M2.5 0 H45.5 A2.5 2.5 0 0 1 48 2.5 V6 H0 V2.5 A2.5 2.5 0 0 1 2.5 0Z" fill="#1a1f71"/><path d="M0 26.3 H48 V29.5 A2.5 2.5 0 0 1 45.5 32 H2.5 A2.5 2.5 0 0 1 0 29.5Z" fill="#f7b600"/><text x="4.2" y="23" textLength="37.8" lengthAdjust="spacingAndGlyphs" font-family="Liberation Sans" font-weight="700" font-style="italic" font-size="17.5" fill="#1a1f71" stroke="#1a1f71" stroke-width="0.7">VISA</text></svg>
<div class="t" style="left:1868.2px;top:1156.99px;font-size:26px;color:#000"><span style="display:inline-block;width:14.6px;text-align:center">4</span><span style="display:inline-block;width:14.6px;text-align:center">1</span><span style="display:inline-block;width:14.6px;text-align:center">1</span><span style="display:inline-block;width:14.6px;text-align:center">1</span><span style="display:inline-block;width:14.6px;text-align:center">1</span><span style="display:inline-block;width:14.6px;text-align:center">1</span></div>
<div class="abs" style="left:1959.3px;top:1164.5px;width:6.2px;height:6.2px;border-radius:50%;background:#000"></div>
<div class="abs" style="left:1968.35px;top:1164.5px;width:6.2px;height:6.2px;border-radius:50%;background:#000"></div>
<div class="abs" style="left:1977.3999999999999px;top:1164.5px;width:6.2px;height:6.2px;border-radius:50%;background:#000"></div>
<div class="abs" style="left:1986.45px;top:1164.5px;width:6.2px;height:6.2px;border-radius:50%;background:#000"></div>
<div class="abs" style="left:1995.5px;top:1164.5px;width:6.2px;height:6.2px;border-radius:50%;background:#000"></div>
<div class="abs" style="left:2004.55px;top:1164.5px;width:6.2px;height:6.2px;border-radius:50%;background:#000"></div>
<div class="t" style="left:2012.4px;top:1156.99px;font-size:26px;color:#000"><span style="display:inline-block;width:14.6px;text-align:center">1</span><span style="display:inline-block;width:14.6px;text-align:center">1</span><span style="display:inline-block;width:14.6px;text-align:center">1</span><span style="display:inline-block;width:14.6px;text-align:center">1</span><span style="display:inline-block;width:8.2px;text-align:center">&nbsp;</span><span style="display:inline-block;width:14.6px;text-align:center">0</span><span style="display:inline-block;width:14.6px;text-align:center">1</span><span style="display:inline-block;width:12.3px;text-align:center">/</span><span style="display:inline-block;width:14.6px;text-align:center">2</span><span style="display:inline-block;width:14.6px;text-align:center">0</span></div>
<svg class="abs" style="left:2160px;top:1152px" width="27" height="28"><path d="M7.5 10 V7.5 A6 6 0 0 1 19.5 7.5 V10" fill="none" stroke="#a3a3a3" stroke-width="2.2"/><rect x="3" y="10" width="21" height="16.5" rx="1.5" fill="none" stroke="#a3a3a3" stroke-width="2.2"/></svg>
<div class="t" style="left:2339.5999999999976px;top:1156.99px;font-size:26px;color:#000;font-weight:400;letter-spacing:-0.214px;">GBP 1.50</div>
<div class="t" style="left:2496.0px;top:1156.99px;font-size:26px;color:#000;font-weight:400;letter-spacing:-0.333px;">1001</div>
<div class="abs" style="left:2714.0px;top:1165.4px;width:6.5px;height:6.5px;border-radius:50%;background:#2a5560"></div>
<div class="abs" style="left:2721.8px;top:1165.4px;width:6.5px;height:6.5px;border-radius:50%;background:#2a5560"></div>
<div class="abs" style="left:2729.6px;top:1165.4px;width:6.5px;height:6.5px;border-radius:50%;background:#2a5560"></div>
<div class="abs" style="left:482px;top:1210px;width:2295.5px;height:82px;background:#f4f7f8"></div>
<svg class="abs" style="left:512px;top:1239px" width="20" height="24"><polyline points="4,2.5 14,12 4,21.5" fill="none" stroke="#000" stroke-width="2.3"/></svg>
<div class="t" style="left:540.2000000000012px;top:1238.99px;font-size:26px;color:#000;font-weight:400;letter-spacing:0.357px;">Mar 1, 2021 2:00:01 AM</div>
<div class="t" style="left:921.2000000000012px;top:1238.99px;font-size:26px;color:#25535f;font-weight:400;letter-spacing:0.636px;">614564001411</div>
<div class="t" style="left:1158.0px;top:1238.99px;font-size:26px;color:#000;font-weight:400;letter-spacing:-0.500px;">SALE</div>
<div class="t" style="left:1257.5999999999976px;top:1238.99px;font-size:26px;color:#27ae60;font-weight:400;letter-spacing:-0.714px;">COMPLETE</div>
<div class="t" style="left:1441.7999999999988px;top:1238.99px;font-size:26px;color:#000;font-weight:400;letter-spacing:-0.167px;">DOE, MR. John</div>
<svg class="abs" style="left:1807px;top:1237px" width="48" height="32" viewBox="0 0 48 32"><rect x="0" y="0" width="48" height="32" rx="2.5" fill="#fff"/><path d="M2.5 0 H45.5 A2.5 2.5 0 0 1 48 2.5 V6 H0 V2.5 A2.5 2.5 0 0 1 2.5 0Z" fill="#1a1f71"/><path d="M0 26.3 H48 V29.5 A2.5 2.5 0 0 1 45.5 32 H2.5 A2.5 2.5 0 0 1 0 29.5Z" fill="#f7b600"/><text x="4.2" y="23" textLength="37.8" lengthAdjust="spacingAndGlyphs" font-family="Liberation Sans" font-weight="700" font-style="italic" font-size="17.5" fill="#1a1f71" stroke="#1a1f71" stroke-width="0.7">VISA</text></svg>
<div class="t" style="left:1868.2px;top:1238.99px;font-size:26px;color:#000"><span style="display:inline-block;width:14.6px;text-align:center">4</span><span style="display:inline-block;width:14.6px;text-align:center">4</span><span style="display:inline-block;width:14.6px;text-align:center">4</span><span style="display:inline-block;width:14.6px;text-align:center">4</span><span style="display:inline-block;width:14.6px;text-align:center">3</span><span style="display:inline-block;width:14.6px;text-align:center">3</span></div>
<div class="abs" style="left:1959.3px;top:1246.5px;width:6.2px;height:6.2px;border-radius:50%;background:#000"></div>
<div class="abs" style="left:1968.35px;top:1246.5px;width:6.2px;height:6.2px;border-radius:50%;background:#000"></div>
<div class="abs" style="left:1977.3999999999999px;top:1246.5px;width:6.2px;height:6.2px;border-radius:50%;background:#000"></div>
<div class="abs" style="left:1986.45px;top:1246.5px;width:6.2px;height:6.2px;border-radius:50%;background:#000"></div>
<div class="abs" style="left:1995.5px;top:1246.5px;width:6.2px;height:6.2px;border-radius:50%;background:#000"></div>
<div class="abs" style="left:2004.55px;top:1246.5px;width:6.2px;height:6.2px;border-radius:50%;background:#000"></div>
<div class="t" style="left:2012.4px;top:1238.99px;font-size:26px;color:#000"><span style="display:inline-block;width:14.6px;text-align:center">0</span><span style="display:inline-block;width:14.6px;text-align:center">9</span><span style="display:inline-block;width:14.6px;text-align:center">6</span><span style="display:inline-block;width:14.6px;text-align:center">6</span><span style="display:inline-block;width:8.2px;text-align:center">&nbsp;</span><span style="display:inline-block;width:14.6px;text-align:center">0</span><span style="display:inline-block;width:14.6px;text-align:center">2</span><span style="display:inline-block;width:12.3px;text-align:center">/</span><span style="display:inline-block;width:14.6px;text-align:center">2</span><span style="display:inline-block;width:14.6px;text-align:center">2</span></div>
<svg class="abs" style="left:2160px;top:1234px" width="27" height="28"><path d="M7.5 10 V7.5 A6 6 0 0 1 19.5 7.5 V10" fill="none" stroke="#a3a3a3" stroke-width="2.2"/><rect x="3" y="10" width="21" height="16.5" rx="1.5" fill="none" stroke="#a3a3a3" stroke-width="2.2"/></svg>
<div class="t" style="left:2339.5999999999976px;top:1238.99px;font-size:26px;color:#000;font-weight:400;letter-spacing:-0.214px;">GBP 2.00</div>
<div class="t" style="left:2496.0px;top:1238.99px;font-size:26px;color:#000;font-weight:400;letter-spacing:-0.333px;">1001</div>
<div class="abs" style="left:2714.0px;top:1247.4px;width:6.5px;height:6.5px;border-radius:50%;background:#2a5560"></div>
<div class="abs" style="left:2721.8px;top:1247.4px;width:6.5px;height:6.5px;border-radius:50%;background:#2a5560"></div>
<div class="abs" style="left:2729.6px;top:1247.4px;width:6.5px;height:6.5px;border-radius:50%;background:#2a5560"></div>
<svg class="abs" style="left:512px;top:1321px" width="20" height="24"><polyline points="4,2.5 14,12 4,21.5" fill="none" stroke="#000" stroke-width="2.3"/></svg>
<div class="t" style="left:540.2000000000012px;top:1320.99px;font-size:26px;color:#000;font-weight:400;letter-spacing:0.357px;">Mar 1, 2021 2:00:01 AM</div>
<div class="t" style="left:921.2000000000012px;top:1320.99px;font-size:26px;color:#25535f;font-weight:400;letter-spacing:0.636px;">614564000654</div>
<div class="t" style="left:1158.0px;top:1320.99px;font-size:26px;color:#000;font-weight:400;letter-spacing:-0.500px;">SALE</div>
<div class="t" style="left:1257.5999999999976px;top:1320.99px;font-size:26px;color:#27ae60;font-weight:400;letter-spacing:-0.714px;">COMPLETE</div>
<div class="t" style="left:1441.7999999999988px;top:1320.99px;font-size:26px;color:#000;font-weight:400;letter-spacing:-0.167px;">FirefoxCardHolder1001</div>
<svg class="abs" style="left:1807px;top:1319px" width="48" height="32" viewBox="0 0 48 32"><rect x="0" y="0" width="48" height="32" rx="2.5" fill="#fff"/><path d="M2.5 0 H45.5 A2.5 2.5 0 0 1 48 2.5 V6 H0 V2.5 A2.5 2.5 0 0 1 2.5 0Z" fill="#1a1f71"/><path d="M0 26.3 H48 V29.5 A2.5 2.5 0 0 1 45.5 32 H2.5 A2.5 2.5 0 0 1 0 29.5Z" fill="#f7b600"/><text x="4.2" y="23" textLength="37.8" lengthAdjust="spacingAndGlyphs" font-family="Liberation Sans" font-weight="700" font-style="italic" font-size="17.5" fill="#1a1f71" stroke="#1a1f71" stroke-width="0.7">VISA</text></svg>
<div class="t" style="left:1868.2px;top:1320.99px;font-size:26px;color:#000"><span style="display:inline-block;width:14.6px;text-align:center">4</span><span style="display:inline-block;width:14.6px;text-align:center">6</span><span style="display:inline-block;width:14.6px;text-align:center">1</span><span style="display:inline-block;width:14.6px;text-align:center">6</span><span style="display:inline-block;width:14.6px;text-align:center">1</span><span style="display:inline-block;width:14.6px;text-align:center">6</span></div>
<div class="abs" style="left:1959.3px;top:1328.5px;width:6.2px;height:6.2px;border-radius:50%;background:#000"></div>
<div class="abs" style="left:1968.35px;top:1328.5px;width:6.2px;height:6.2px;border-radius:50%;background:#000"></div>
<div class="abs" style="left:1977.3999999999999px;top:1328.5px;width:6.2px;height:6.2px;border-radius:50%;background:#000"></div>
<div class="abs" style="left:1986.45px;top:1328.5px;width:6.2px;height:6.2px;border-radius:50%;background:#000"></div>
<div class="abs" style="left:1995.5px;top:1328.5px;width:6.2px;height:6.2px;border-radius:50%;background:#000"></div>
<div class="abs" style="left:2004.55px;top:1328.5px;width:6.2px;height:6.2px;border-radius:50%;background:#000"></div>
<div class="t" style="left:2012.4px;top:1320.99px;font-size:26px;color:#000"><span style="display:inline-block;width:14.6px;text-align:center">1</span><span style="display:inline-block;width:14.6px;text-align:center">6</span><span style="display:inline-block;width:14.6px;text-align:center">1</span><span style="display:inline-block;width:14.6px;text-align:center">6</span><span style="display:inline-block;width:8.2px;text-align:center">&nbsp;</span><span style="display:inline-block;width:14.6px;text-align:center">1</span><span style="display:inline-block;width:14.6px;text-align:center">1</span><span style="display:inline-block;width:12.3px;text-align:center">/</span><span style="display:inline-block;width:14.6px;text-align:center">2</span><span style="display:inline-block;width:14.6px;text-align:center">4</span></div>
<svg class="abs" style="left:2160px;top:1316px" width="27" height="28"><path d="M7.5 10 V7.5 A6 6 0 0 1 19.5 7.5 V10" fill="none" stroke="#a3a3a3" stroke-width="2.2"/><rect x="3" y="10" width="21" height="16.5" rx="1.5" fill="none" stroke="#a3a3a3" stroke-width="2.2"/></svg>
<div class="t" style="left:2339.5999999999976px;top:1320.99px;font-size:26px;color:#000;font-weight:400;letter-spacing:-0.214px;">GBP 1.00</div>
<div class="t" style="left:2496.0px;top:1320.99px;font-size:26px;color:#000;font-weight:400;letter-spacing:-0.333px;">1001</div>
<div class="abs" style="left:2714.0px;top:1329.4px;width:6.5px;height:6.5px;border-radius:50%;background:#2a5560"></div>
<div class="abs" style="left:2721.8px;top:1329.4px;width:6.5px;height:6.5px;border-radius:50%;background:#2a5560"></div>
<div class="abs" style="left:2729.6px;top:1329.4px;width:6.5px;height:6.5px;border-radius:50%;background:#2a5560"></div>
<div class="abs" style="left:482px;top:1374px;width:2295.5px;height:82px;background:#f4f7f8"></div>
<svg class="abs" style="left:512px;top:1403px" width="20" height="24"><polyline points="4,2.5 14,12 4,21.5" fill="none" stroke="#000" stroke-width="2.3"/></svg>
<div class="t" style="left:540.2000000000012px;top:1402.99px;font-size:26px;color:#000;font-weight:400;letter-spacing:0.357px;">Jan 28, 2021 6:52:33 PM</div>
<div class="t" style="left:921.2000000000012px;top:1402.99px;font-size:26px;color:#25535f;font-weight:400;letter-spacing:0.636px;">611859952910</div>
<div class="t" style="left:1158.0px;top:1402.99px;font-size:26px;color:#000;font-weight:400;letter-spacing:-0.500px;">SALE</div>
<div class="t" style="left:1257.5999999999976px;top:1402.99px;font-size:26px;color:#27ae60;font-weight:400;letter-spacing:-0.714px;">COMPLETE</div>
<div class="t" style="left:1441.7999999999988px;top:1402.99px;font-size:26px;color:#000;font-weight:400;letter-spacing:-0.167px;">DOE, MR. John</div>
<svg class="abs" style="left:1807px;top:1401px" width="48" height="32" viewBox="0 0 48 32"><rect x="0" y="0" width="48" height="32" rx="2.5" fill="#fff"/><path d="M2.5 0 H45.5 A2.5 2.5 0 0 1 48 2.5 V6 H0 V2.5 A2.5 2.5 0 0 1 2.5 0Z" fill="#1a1f71"/><path d="M0 26.3 H48 V29.5 A2.5 2.5 0 0 1 45.5 32 H2.5 A2.5 2.5 0 0 1 0 29.5Z" fill="#f7b600"/><text x="4.2" y="23" textLength="37.8" lengthAdjust="spacingAndGlyphs" font-family="Liberation Sans" font-weight="700" font-style="italic" font-size="17.5" fill="#1a1f71" stroke="#1a1f71" stroke-width="0.7">VISA</text></svg>
<div class="t" style="left:1868.2px;top:1402.99px;font-size:26px;color:#000"><span style="display:inline-block;width:14.6px;text-align:center">4</span><span style="display:inline-block;width:14.6px;text-align:center">4</span><span style="display:inline-block;width:14.6px;text-align:center">4</span><span style="display:inline-block;width:14.6px;text-align:center">4</span><span style="display:inline-block;width:14.6px;text-align:center">3</span><span style="display:inline-block;width:14.6px;text-align:center">3</span></div>
<div class="abs" style="left:1959.3px;top:1410.5px;width:6.2px;height:6.2px;border-radius:50%;background:#000"></div>
<div class="abs" style="left:1968.35px;top:1410.5px;width:6.2px;height:6.2px;border-radius:50%;background:#000"></div>
<div class="abs" style="left:1977.3999999999999px;top:1410.5px;width:6.2px;height:6.2px;border-radius:50%;background:#000"></div>
<div class="abs" style="left:1986.45px;top:1410.5px;width:6.2px;height:6.2px;border-radius:50%;background:#000"></div>
<div class="abs" style="left:1995.5px;top:1410.5px;width:6.2px;height:6.2px;border-radius:50%;background:#000"></div>
<div class="abs" style="left:2004.55px;top:1410.5px;width:6.2px;height:6.2px;border-radius:50%;background:#000"></div>
<div class="t" style="left:2012.4px;top:1402.99px;font-size:26px;color:#000"><span style="display:inline-block;width:14.6px;text-align:center">0</span><span style="display:inline-block;width:14.6px;text-align:center">9</span><span style="display:inline-block;width:14.6px;text-align:center">6</span><span style="display:inline-block;width:14.6px;text-align:center">6</span><span style="display:inline-block;width:8.2px;text-align:center">&nbsp;</span><span style="display:inline-block;width:14.6px;text-align:center">0</span><span style="display:inline-block;width:14.6px;text-align:center">2</span><span style="display:inline-block;width:12.3px;text-align:center">/</span><span style="display:inline-block;width:14.6px;text-align:center">2</span><span style="display:inline-block;width:14.6px;text-align:center">2</span></div>
<svg class="abs" style="left:2160px;top:1398px" width="27" height="28"><path d="M7.5 10 V7.5 A6 6 0 0 1 19.5 7.5 V10" fill="none" stroke="#a3a3a3" stroke-width="2.2"/><rect x="3" y="10" width="21" height="16.5" rx="1.5" fill="none" stroke="#a3a3a3" stroke-width="2.2"/></svg>
<div class="t" style="left:2339.5999999999976px;top:1402.99px;font-size:26px;color:#000;font-weight:400;letter-spacing:-0.214px;">GBP 1.00</div>
<div class="t" style="left:2496.0px;top:1402.99px;font-size:26px;color:#000;font-weight:400;letter-spacing:-0.333px;">1001</div>
<div class="abs" style="left:2714.0px;top:1411.4px;width:6.5px;height:6.5px;border-radius:50%;background:#2a5560"></div>
<div class="abs" style="left:2721.8px;top:1411.4px;width:6.5px;height:6.5px;border-radius:50%;background:#2a5560"></div>
<div class="abs" style="left:2729.6px;top:1411.4px;width:6.5px;height:6.5px;border-radius:50%;background:#2a5560"></div>
<svg class="abs" style="left:512px;top:1485px" width="20" height="24"><polyline points="4,2.5 14,12 4,21.5" fill="none" stroke="#000" stroke-width="2.3"/></svg>
<div class="t" style="left:540.2000000000012px;top:1484.99px;font-size:26px;color:#000;font-weight:400;letter-spacing:0.357px;">Jan 28, 2021 6:51:29 PM</div>
<div class="t" style="left:921.2000000000012px;top:1484.99px;font-size:26px;color:#25535f;font-weight:400;letter-spacing:0.636px;">611859888564</div>
<div class="t" style="left:1158.0px;top:1484.99px;font-size:26px;color:#000;font-weight:400;letter-spacing:-0.500px;">SALE</div>
<div class="t" style="left:1257.5999999999976px;top:1484.99px;font-size:26px;color:#27ae60;font-weight:400;letter-spacing:-0.714px;">COMPLETE</div>
<div class="t" style="left:1441.7999999999988px;top:1484.99px;font-size:26px;color:#000;font-weight:400;letter-spacing:-0.167px;">DOE, MR. John</div>
<svg class="abs" style="left:1807px;top:1483px" width="48" height="32" viewBox="0 0 48 32"><rect x="0" y="0" width="48" height="32" rx="2.5" fill="#fff"/><path d="M2.5 0 H45.5 A2.5 2.5 0 0 1 48 2.5 V6 H0 V2.5 A2.5 2.5 0 0 1 2.5 0Z" fill="#1a1f71"/><path d="M0 26.3 H48 V29.5 A2.5 2.5 0 0 1 45.5 32 H2.5 A2.5 2.5 0 0 1 0 29.5Z" fill="#f7b600"/><text x="4.2" y="23" textLength="37.8" lengthAdjust="spacingAndGlyphs" font-family="Liberation Sans" font-weight="700" font-style="italic" font-size="17.5" fill="#1a1f71" stroke="#1a1f71" stroke-width="0.7">VISA</text></svg>
<div class="t" style="left:1868.2px;top:1484.99px;font-size:26px;color:#000"><span style="display:inline-block;width:14.6px;text-align:center">4</span><span style="display:inline-block;width:14.6px;text-align:center">4</span><span style="display:inline-block;width:14.6px;text-align:center">4</span><span style="display:inline-block;width:14.6px;text-align:center">4</span><span style="display:inline-block;width:14.6px;text-align:center">3</span><span style="display:inline-block;width:14.6px;text-align:center">3</span></div>
<div class="abs" style="left:1959.3px;top:1492.5px;width:6.2px;height:6.2px;border-radius:50%;background:#000"></div>
<div class="abs" style="left:1968.35px;top:1492.5px;width:6.2px;height:6.2px;border-radius:50%;background:#000"></div>
<div class="abs" style="left:1977.3999999999999px;top:1492.5px;width:6.2px;height:6.2px;border-radius:50%;background:#000"></div>
<div class="abs" style="left:1986.45px;top:1492.5px;width:6.2px;height:6.2px;border-radius:50%;background:#000"></div>
<div class="abs" style="left:1995.5px;top:1492.5px;width:6.2px;height:6.2px;border-radius:50%;background:#000"></div>
<div class="abs" style="left:2004.55px;top:1492.5px;width:6.2px;height:6.2px;border-radius:50%;background:#000"></div>
<div class="t" style="left:2012.4px;top:1484.99px;font-size:26px;color:#000"><span style="display:inline-block;width:14.6px;text-align:center">0</span><span style="display:inline-block;width:14.6px;text-align:center">9</span><span style="display:inline-block;width:14.6px;text-align:center">6</span><span style="display:inline-block;width:14.6px;text-align:center">6</span><span style="display:inline-block;width:8.2px;text-align:center">&nbsp;</span><span style="display:inline-block;width:14.6px;text-align:center">0</span><span style="display:inline-block;width:14.6px;text-align:center">2</span><span style="display:inline-block;width:12.3px;text-align:center">/</span><span style="display:inline-block;width:14.6px;text-align:center">2</span><span style="display:inline-block;width:14.6px;text-align:center">2</span></div>
<svg class="abs" style="left:2160px;top:1480px" width="27" height="28"><path d="M7.5 10 V7.5 A6 6 0 0 1 19.5 7.5 V10" fill="none" stroke="#a3a3a3" stroke-width="2.2"/><rect x="3" y="10" width="21" height="16.5" rx="1.5" fill="none" stroke="#a3a3a3" stroke-width="2.2"/></svg>
<div class="t" style="left:2339.5999999999976px;top:1484.99px;font-size:26px;color:#000;font-weight:400;letter-spacing:-0.214px;">GBP 1.00</div>
<div class="t" style="left:2496.0px;top:1484.99px;font-size:26px;color:#000;font-weight:400;letter-spacing:-0.333px;">1001</div>
<div class="abs" style="left:2714.0px;top:1493.4px;width:6.5px;height:6.5px;border-radius:50%;background:#2a5560"></div>
<div class="abs" style="left:2721.8px;top:1493.4px;width:6.5px;height:6.5px;border-radius:50%;background:#2a5560"></div>
<div class="abs" style="left:2729.6px;top:1493.4px;width:6.5px;height:6.5px;border-radius:50%;background:#2a5560"></div>
<div class="abs" style="left:481.5px;top:718px;width:6.5px;height:820px;background:#27ae60"></div>
<div class="abs" style="left:1390px;top:1565.5px;width:480px;height:64.5px;background:#fff;border:2px solid #dcdcdc;border-radius:33px"></div>
<div class="t" style="left:1555.2000000000012px;top:1587.24px;font-size:25px;color:#25535f;font-weight:700;letter-spacing:-0.500px;">LOAD MORE</div>
<svg class="abs" style="left:27px;top:201.2px;overflow:visible" width="27" height="21.4" viewBox="0 0 27 21.4"><path d="M2.6 21.4 A13.5 13.5 0 1 1 24.4 21.4 Z" fill="#25535f"/><circle cx="4.3" cy="15.2" r="1.5" fill="#deeaea"/><circle cx="6.5" cy="7.9" r="1.5" fill="#deeaea"/><circle cx="13.3" cy="4.5" r="1.5" fill="#deeaea"/><circle cx="20" cy="7.9" r="1.5" fill="#deeaea"/><circle cx="22.5" cy="15.2" r="1.5" fill="#deeaea"/><line x1="13.2" y1="16" x2="16.3" y2="4.8" stroke="#deeaea" stroke-width="2"/><path d="M10.3 17.8 A3 3 0 0 1 16.3 17.8 Z" fill="#deeaea"/></svg>
<svg class="abs" style="left:29.9px;top:262.8px;overflow:visible" width="21" height="24" viewBox="0 0 21 24"><rect x="0" y="0" width="21" height="24" rx="2.2" fill="#25535f"/><rect x="2.7" y="3.4" width="15.5" height="5.6" fill="#deeaea"/><rect x="2.7" y="12" width="2.8" height="2.7" fill="#deeaea"/><rect x="8.8" y="12" width="2.8" height="2.7" fill="#deeaea"/><rect x="2.7" y="18.3" width="2.8" height="2.7" fill="#deeaea"/><rect x="8.8" y="18.3" width="2.8" height="2.7" fill="#deeaea"/><rect x="14.6" y="12" width="2.7" height="9" fill="#deeaea"/></svg>
<svg class="abs" style="left:31.8px;top:326px;overflow:visible" width="17.2" height="23.5" viewBox="0 0 17.2 23.5"><rect x="4.5" y="0" width="8.2" height="16.5" rx="4.1" fill="#25535f"/><path d="M1.3 9.5 V11 A7.3 7.3 0 0 0 15.9 11 V9.5" fill="none" stroke="#25535f" stroke-width="2.2"/><line x1="8.6" y1="18" x2="8.6" y2="22" stroke="#25535f" stroke-width="2.2"/><line x1="4.2" y1="22.4" x2="13" y2="22.4" stroke="#25535f" stroke-width="2.2"/></svg>
<svg class="abs" style="left:31px;top:388.1px;overflow:visible" width="18.4" height="24" viewBox="0 0 18.4 24"><path d="M1.5 0 H11.3 V6.2 H18.4 V22.5 A1.5 1.5 0 0 1 16.9 24 H1.5 A1.5 1.5 0 0 1 0 22.5 V1.5 A1.5 1.5 0 0 1 1.5 0Z" fill="#25535f"/><path d="M12.7 0 L18.4 5.1 H12.7Z" fill="#25535f"/><rect x="4.7" y="10.8" width="9.2" height="1.3" fill="#deeaea"/><rect x="4.7" y="13.6" width="9.2" height="1.3" fill="#deeaea"/><rect x="4.7" y="16.9" width="9.2" height="1.3" fill="#deeaea"/></svg>
<svg class="abs" style="left:31px;top:514px;overflow:visible" width="18.4" height="24" viewBox="0 0 18.4 24"><path d="M1.5 0 H11.3 V6.2 H18.4 V22.5 A1.5 1.5 0 0 1 16.9 24 H1.5 A1.5 1.5 0 0 1 0 22.5 V1.5 A1.5 1.5 0 0 1 1.5 0Z" fill="#25535f"/><path d="M12.7 0 L18.4 5.1 H12.7Z" fill="#25535f"/><rect x="4.7" y="10.8" width="9.2" height="1.3" fill="#c8e1de"/><rect x="4.7" y="13.6" width="9.2" height="1.3" fill="#c8e1de"/><rect x="4.7" y="16.9" width="9.2" height="1.3" fill="#c8e1de"/></svg>
<svg class="abs" style="left:58px;top:701.8px;overflow:visible" width="18.4" height="24" viewBox="0 0 18.4 24"><path d="M1.5 0 H11.3 V6.2 H18.4 V22.5 A1.5 1.5 0 0 1 16.9 24 H1.5 A1.5 1.5 0 0 1 0 22.5 V1.5 A1.5 1.5 0 0 1 1.5 0Z" fill="#7096a8"/><path d="M12.7 0 L18.4 5.1 H12.7Z" fill="#7096a8"/><rect x="4.7" y="10.8" width="9.2" height="1.3" fill="#fff"/><rect x="4.7" y="13.6" width="9.2" height="1.3" fill="#fff"/><rect x="4.7" y="16.9" width="9.2" height="1.3" fill="#fff"/></svg>
<svg class="abs" style="left:25px;top:452.5px;overflow:visible" width="30.7" height="21.0" viewBox="0 0 30.7 21.0"><g transform="scale(1.0)"><circle cx="15.3" cy="5.1" r="5.1" fill="#25535f"/><path d="M6.2 19 V17.5 A5.5 5.5 0 0 1 11.7 12 H18.9 A5.5 5.5 0 0 1 24.4 17.5 V19 A2 2 0 0 1 22.4 21 H8.2 A2 2 0 0 1 6.2 19Z" fill="#25535f"/><circle cx="4.9" cy="6.1" r="2.9" fill="#25535f"/><circle cx="25.8" cy="6.1" r="2.9" fill="#25535f"/><path d="M0 15.5 V14 A3.5 3.5 0 0 1 3.5 10.5 H7 A3.5 3.5 0 0 1 8.8 11 A7 7 0 0 0 5 16.2 H0.7 A0.7 0.7 0 0 1 0 15.5Z" fill="#25535f"/><path d="M30.7 15.5 V14 A3.5 3.5 0 0 0 27.2 10.5 H23.7 A3.5 3.5 0 0 0 21.9 11 A7 7 0 0 1 25.7 16.2 H30 A0.7 0.7 0 0 0 30.7 15.5Z" fill="#25535f"/></g></svg>
<svg class="abs" style="left:52.1px;top:828.4px;overflow:visible" width="30.086" height="20.58" viewBox="0 0 30.086 20.58"><g transform="scale(0.98)"><circle cx="15.3" cy="5.1" r="5.1" fill="#7096a8"/><path d="M6.2 19 V17.5 A5.5 5.5 0 0 1 11.7 12 H18.9 A5.5 5.5 0 0 1 24.4 17.5 V19 A2 2 0 0 1 22.4 21 H8.2 A2 2 0 0 1 6.2 19Z" fill="#7096a8"/><circle cx="4.9" cy="6.1" r="2.9" fill="#7096a8"/><circle cx="25.8" cy="6.1" r="2.9" fill="#7096a8"/><path d="M0 15.5 V14 A3.5 3.5 0 0 1 3.5 10.5 H7 A3.5 3.5 0 0 1 8.8 11 A7 7 0 0 0 5 16.2 H0.7 A0.7 0.7 0 0 1 0 15.5Z" fill="#7096a8"/><path d="M30.7 15.5 V14 A3.5 3.5 0 0 0 27.2 10.5 H23.7 A3.5 3.5 0 0 0 21.9 11 A7 7 0 0 1 25.7 16.2 H30 A0.7 0.7 0 0 0 30.7 15.5Z" fill="#7096a8"/></g></svg>
<svg class="abs" style="left:53.5px;top:765px;overflow:visible" width="27.2" height="21.4" viewBox="0 0 27.2 21.4"><path d="M2 0 H25.2 A2 2 0 0 1 27.2 2 V5 H0 V2 A2 2 0 0 1 2 0Z" fill="#7096a8"/><path d="M0 10.7 H27.2 V19.4 A2 2 0 0 1 25.2 21.4 H2 A2 2 0 0 1 0 19.4Z" fill="#7096a8"/><rect x="3.1" y="15.5" width="4.2" height="2.8" fill="#fff"/><rect x="9.4" y="15.5" width="7.1" height="2.8" fill="#fff"/></svg>
<svg class="abs" style="left:55.4px;top:576.5px;overflow:visible" width="23.2" height="23.2" viewBox="0 0 23.2 23.2"><circle cx="11.6" cy="11.6" r="10.4" fill="none" stroke="#6e98aa" stroke-width="2.3"/></svg>
<svg class="abs" style="left:55.4px;top:639.3px;overflow:visible" width="23.2" height="23.2" viewBox="0 0 23.2 23.2"><circle cx="11.6" cy="11.6" r="11.6" fill="#25535f"/></svg>
<svg class="abs" style="left:29.9px;top:891.2px;overflow:visible" width="21" height="21.2" viewBox="0 0 21 21.2"><rect width="21" height="21.2" rx="2.3" fill="#25535f"/><text x="10.5" y="17.2" text-anchor="middle" font-family="Liberation Sans" font-weight="700" font-size="17" fill="#eef3f3">$</text></svg>
<svg class="abs" style="left:25px;top:951.7px;overflow:visible" width="31" height="25" viewBox="0 0 31 25"><polygon points="11.20,1.85 13.16,2.24 13.95,4.98 15.25,5.85 18.08,5.53 19.20,7.19 17.81,9.69 18.12,11.22 20.35,13.00 19.96,14.96 17.22,15.75 16.35,17.05 16.67,19.88 15.01,21.00 12.51,19.61 10.98,19.92 9.20,22.15 7.24,21.76 6.45,19.02 5.15,18.15 2.32,18.47 1.20,16.81 2.59,14.31 2.28,12.78 0.05,11.00 0.44,9.04 3.18,8.25 4.05,6.95 3.73,4.12 5.39,3.00 7.89,4.39 9.42,4.08" fill="#25535f" stroke="#25535f" stroke-width="1" stroke-linejoin="round"/><circle cx="10.2" cy="12" r="6.32" fill="#25535f"/><circle cx="10.2" cy="12" r="3.8" fill="#eef3f3"/><polygon points="25.79,0.05 27.13,0.40 27.62,2.02 28.38,2.78 30.00,3.27 30.35,4.61 29.20,5.84 28.92,6.88 29.30,8.53 28.33,9.50 26.68,9.12 25.64,9.40 24.41,10.55 23.07,10.20 22.58,8.58 21.82,7.82 20.20,7.33 19.85,5.99 21.00,4.76 21.28,3.72 20.90,2.07 21.87,1.10 23.52,1.48 24.56,1.20" fill="#25535f" stroke="#25535f" stroke-width="1" stroke-linejoin="round"/><circle cx="25.1" cy="5.3" r="3.29" fill="#25535f"/><circle cx="25.1" cy="5.3" r="1.9" fill="#eef3f3"/><polygon points="25.79,13.85 27.13,14.20 27.62,15.82 28.38,16.58 30.00,17.07 30.35,18.41 29.20,19.64 28.92,20.68 29.30,22.33 28.33,23.30 26.68,22.92 25.64,23.20 24.41,24.35 23.07,24.00 22.58,22.38 21.82,21.62 20.20,21.13 19.85,19.79 21.00,18.56 21.28,17.52 20.90,15.87 21.87,14.90 23.52,15.28 24.56,15.00" fill="#25535f" stroke="#25535f" stroke-width="1" stroke-linejoin="round"/><circle cx="25.1" cy="19.1" r="3.29" fill="#25535f"/><circle cx="25.1" cy="19.1" r="1.9" fill="#eef3f3"/></svg>
<svg class="abs" style="left:28.1px;top:1016.2px;overflow:visible" width="24.5" height="21" viewBox="0 0 24.5 21"><rect x="6.5" y="1.6" width="18" height="3.2" rx="1" fill="#25535f"/><rect x="6.5" y="8.9" width="18" height="3.2" rx="1" fill="#25535f"/><rect x="6.5" y="16.5" width="18" height="3.2" rx="1" fill="#25535f"/><text x="2.6" y="6" text-anchor="middle" font-family="Liberation Sans" font-weight="700" font-size="7" fill="#25535f">1</text><text x="2.6" y="13.3" text-anchor="middle" font-family="Liberation Sans" font-weight="700" font-size="7" fill="#25535f">2</text><text x="2.6" y="20.8" text-anchor="middle" font-family="Liberation Sans" font-weight="700" font-size="7" fill="#25535f">3</text></svg>
<svg class="abs" style="left:28.4px;top:1077.9px;overflow:visible" width="23.8" height="23.8" viewBox="0 0 23.8 23.8"><circle cx="11.9" cy="11.9" r="11.9" fill="#25535f"/><path d="M8 9 A3.9 3.6 0 1 1 13.4 12.2 Q11.9 13 11.9 14.4" fill="none" stroke="#f1f5f5" stroke-width="2.6"/><circle cx="11.9" cy="18" r="1.7" fill="#f1f5f5"/></svg>
<svg class="abs" style="left:29.9px;top:1140px;overflow:visible" width="21.3" height="24.1" viewBox="0 0 21.3 24.1"><rect width="21.3" height="24.1" rx="2.2" fill="#25535f"/><circle cx="10.6" cy="20.6" r="1.4" fill="#f2f5f5"/></svg>
<svg class="abs" style="left:29.9px;top:1204.8px;overflow:visible" width="21.3" height="20.8" viewBox="0 0 21.3 20.8"><path d="M1.5 7.5 V1.5 H7.5 M13.8 1.5 H19.8 V7.5 M19.8 13.3 V19.3 H13.8 M7.5 19.3 H1.5 V13.3" fill="none" stroke="#25535f" stroke-width="3"/></svg>
<svg class="abs" style="left:28.4px;top:1268px;overflow:visible" width="24" height="18.2" viewBox="0 0 24 18.2"><path d="M8.5 1.5 H4.5 A3 3 0 0 0 1.5 4.5 V13.7 A3 3 0 0 0 4.5 16.7 H8.5" fill="none" stroke="#25535f" stroke-width="3"/><path d="M6.5 6 H13 V0 L24 9.1 L13 18.2 V12.2 H6.5Z" fill="#25535f"/></svg>
<svg class="abs" style="left:407.5px;top:268.68px;overflow:visible" width="35" height="19" viewBox="0 0 35 19"><polyline points="1.2,1.2 17.5,17.5 33.8,1.2" fill="none" stroke="#25535f" stroke-width="2.4"/></svg>
<svg class="abs" style="left:407.5px;top:456.71999999999997px;overflow:visible" width="35" height="19" viewBox="0 0 35 19"><polyline points="1.2,1.2 17.5,17.5 33.8,1.2" fill="none" stroke="#25535f" stroke-width="2.4"/></svg>
<svg class="abs" style="left:407.5px;top:832.8px;overflow:visible" width="35" height="19" viewBox="0 0 35 19"><polyline points="1.2,1.2 17.5,17.5 33.8,1.2" fill="none" stroke="#25535f" stroke-width="2.4"/></svg>
<svg class="abs" style="left:407.5px;top:958.1599999999999px;overflow:visible" width="35" height="19" viewBox="0 0 35 19"><polyline points="1.2,1.2 17.5,17.5 33.8,1.2" fill="none" stroke="#25535f" stroke-width="2.4"/></svg>
<svg class="abs" style="left:416px;top:516px;overflow:visible" width="18" height="18" viewBox="0 0 18 18"><path d="M1 1 L17 17 M17 1 L1 17" fill="none" stroke="#25535f" stroke-width="2.3"/></svg>
</body></html>
